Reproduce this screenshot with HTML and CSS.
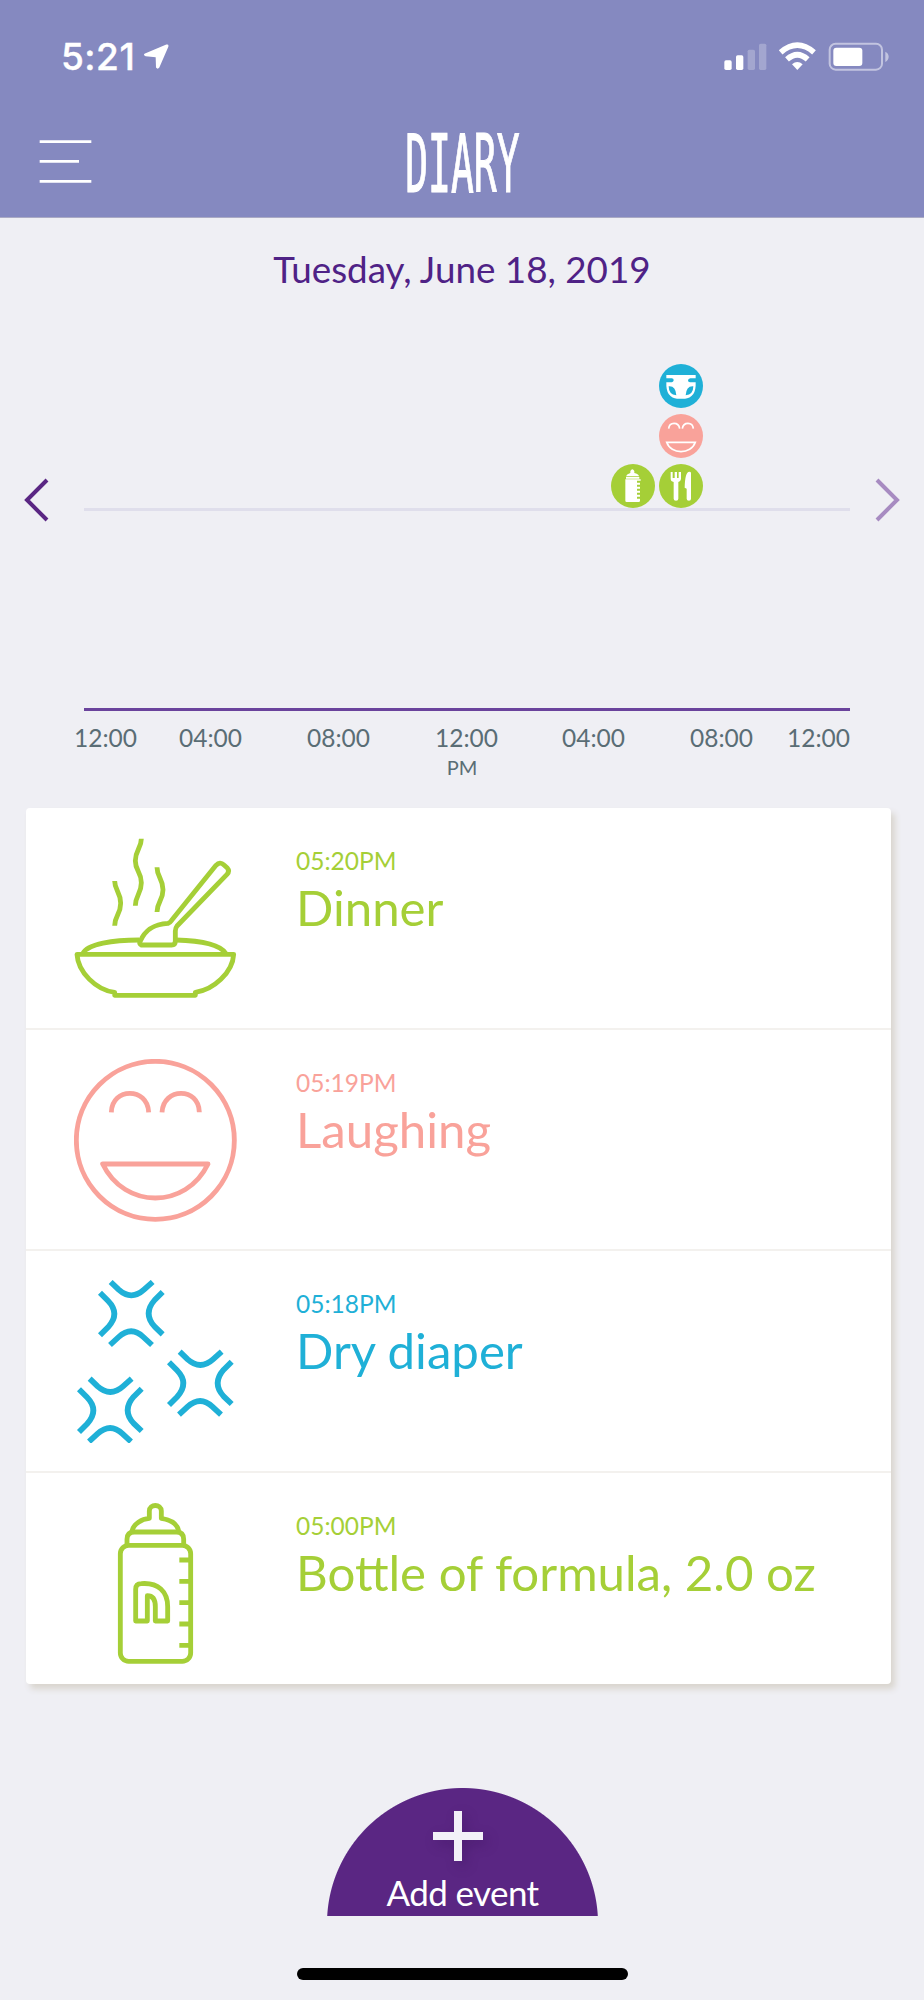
FILE: index.html
```html
<!DOCTYPE html>
<html lang="en">
<head>
    <meta charset="UTF-8">
    <meta name="viewport" content="width=device-width, initial-scale=1.0">
    <title>Diary</title>
    <link rel="stylesheet" href="styles.css">
</head>
<body>

    <header class="header">
        <div class="status-bar">
            <div class="clock">
                <span>5:21</span>
                <svg class="location" viewBox="430 130 78 80">
                    <path d="M436 161L500 134Q508 132 506 141L479 203Q474 210 469 203L468 172L438 169Q429 165 436 161Z"/>
                </svg>
            </div>
            <svg class="status-icons" viewBox="780 120 510 102">
                <rect x="787" y="181" width="22" height="29" rx="5"/>
                <rect x="822" y="166" width="22" height="44" rx="5"/>
                <g opacity="0.25">
                    <rect x="857" y="149" width="22" height="61" rx="5"/>
                    <rect x="891" y="131" width="22" height="79" rx="5"/>
                </g>
                <path d="M990 193Q1006 179 1022 193L1006 210Z"/>
                <path class="wifi" d="M956 157Q1006 114 1056 157M975 178Q1006 150 1037 178"/>
                <rect class="battery" x="1103" y="131" width="157" height="78" rx="18"/>
                <rect x="1114" y="143" width="87" height="55" rx="9"/>
                <path opacity="0.5" d="M1270 155Q1280 160 1280 170Q1280 180 1270 186Z"/>
            </svg>
        </div>
        <div class="title-bar">
            <svg class="menu" viewBox="117 414 159 138">
                <path d="M119 425H274M119 484H237M119 544H274"/>
            </svg>
            <h1><span>DIARY</span></h1>
        </div>
    </header>

    <h2 class="date">Tuesday, June 18, 2019</h2>

    <section class="chart">
        <svg class="arrow" viewBox="0 0 26 46">
            <path d="M23 3L3 23L23 43"/>
        </svg>
        <div class="plot">
            <div class="markers">
                <div class="stack">
                    <svg class="marker green" viewBox="62 340 132 132">
                        <circle cx="128" cy="406" r="66"/>
                        <path class="fill" d="M120 367V361Q126 351 132 361V367Q144 369 146 377H107Q110 369 120 367ZM107 379H147V384H107ZM105 386H151V390H140V396H149V402H140V408H149V414H140V420H149V426H140V432H149V438H140V444H149V450Q149 454 145 454H109Q105 454 105 450Z"/>
                    </svg>
                </div>
                <div class="stack">
                    <svg class="marker blue" viewBox="206 40 132 132">
                        <circle cx="272" cy="106" r="66"/>
                        <path class="fill" d="M228 73H316V83H228ZM228 95H240Q250 95 250 88Q250 84 244 83H300Q293 84 293 90Q294 95 304 95H316Q317 118 309 130Q298 144 284 144H260Q246 144 235 130Q227 118 228 95Z"/>
                        <path class="hole" d="M235 107Q256 105 258 134Q235 132 235 107ZM309 107Q288 105 286 134Q309 132 309 107Z"/>
                    </svg>
                    <svg class="marker pink" viewBox="206 190 132 132">
                        <circle cx="272" cy="256" r="66"/>
                        <path class="line" d="M235 234C237 213 265 213 268 234M276 234C279 213 307 213 309 234M229 275H315C302 312 242 312 229 275Z"/>
                    </svg>
                    <svg class="marker green" viewBox="206 340 132 132">
                        <circle cx="272" cy="406" r="66"/>
                        <path class="fill" d="M241 364H247V382H253V364H260V382H265V364H272V385Q271 392 264 394V444Q264 450 257 450Q250 450 250 444V394Q241 392 241 385ZM302 364V444Q302 450 296 450Q289 450 289 444V414L283 411Q284 363 297 363Q302 363 302 367Z"/>
                    </svg>
                </div>
            </div>
        </div>
        <svg class="arrow next" viewBox="0 0 26 46">
            <path d="M3 3L23 23L3 43"/>
        </svg>
    </section>

    <div class="hours">
        <span>12:00</span>
        <span>04:00</span>
        <span>08:00</span>
        <span>12:00</span>
        <span>04:00</span>
        <span>08:00</span>
        <span>12:00</span>
    </div>
    <div class="meridiem">PM</div>

    <main class="events">
        <article class="event green">
            <svg class="icon" viewBox="162 113 489 489">
                <path d="M364 118C364 147 346 152 346 184C346 216 364 216 364 250C364 284 346 288 346 319M284 245C284 274 302 278 302 312C302 346 284 348 284 379M411 204C411 234 429 238 429 271C429 304 411 308 411 338"/>
                <path d="M171 465H641C638 520 580 572 526 579V588H284V579C228 572 174 518 171 465ZM189 462C202 434 280 422 357 422M468 422C545 424 600 436 617 462"/>
                <path d="M364 437Q357 434 360 427C378 384 410 374 444 372Q450 370 455 363L588 198Q600 185 612 197L622 206Q630 215 621 225L471 380Q466 386 466 395V425Q466 437 455 437Z"/>
            </svg>
            <div class="info">
                <p class="time">05:20PM</p>
                <h3>Dinner</h3>
            </div>
        </article>
        <article class="event pink">
            <svg class="icon" viewBox="162 87 489 489">
                <circle cx="406" cy="331" r="237"/>
                <path d="M274 247C276 171 383 171 386 247M426 247C430 171 537 171 538 247"/>
                <path d="M248 402H564C498 538 314 538 248 402Z"/>
            </svg>
            <div class="info">
                <p class="time">05:19PM</p>
                <h3>Laughing</h3>
            </div>
        </article>
        <article class="event blue">
            <svg class="icon bursts" viewBox="162 91 489 489">
                <defs>
                    <g id="burst">
                        <path d="M-62 -95L-38 -72Q0 -38 38 -72L64 -95M-64 94L-38 70Q0 36 36 70L62 94M-94 -63L-70 -39Q-32 0 -70 41L-94 65M94 -65L70 -41Q34 0 70 39L94 62"/>
                    </g>
                </defs>
                <use href="#burst" x="334" y="192"/>
                <use href="#burst" x="541" y="401"/>
                <use href="#burst" x="271" y="482"/>
            </svg>
            <div class="info">
                <p class="time">05:18PM</p>
                <h3>Dry diaper</h3>
            </div>
        </article>
        <article class="event green">
            <svg class="icon" viewBox="162 96 489 489">
                <path d="M336 183C341 161 365 147 388 145V123C388 101 424 101 424 123V145C449 149 472 160 476 183"/>
                <path d="M321 225V208Q321 186 343 186H469Q491 186 491 208V225"/>
                <rect x="301" y="226" width="211" height="348" rx="25"/>
                <path d="M478 270H510M478 334H510M478 398H510M478 462H510M478 526H510"/>
                <path d="M347 453V358Q347 341 364 341C415 337 443 365 443 410V453H406V410Q406 377 382 377V453Z"/>
            </svg>
            <div class="info">
                <p class="time">05:00PM</p>
                <h3>Bottle of formula, 2.0 oz</h3>
            </div>
        </article>
    </main>

    <button class="add-event">
        <svg class="plus" viewBox="0 0 50 50">
            <path d="M25 0V50M0 25H50"/>
        </svg>
        <span>Add event</span>
    </button>

    <div class="home-indicator"></div>

</body>
</html>
```

FILE: styles.css
```css
:root {
    --header: #8589c0;
    --background: #efeff4;
    --surface: #ffffff;
    --purple: #4f2286;
    --button: #5a2683;
    --text: #5a6d75;
    --green: #a5cf37;
    --pink: #f9a29a;
    --blue: #1fb0d7;
}

* {
    box-sizing: border-box;
    margin: 0;
    padding: 0;
}

body {
    font-family: Lato, 'Open Sans', sans-serif;
    background-color: var(--background);
    height: 2000px;
    overflow: hidden;
}

svg {
    display: block;
    flex-shrink: 0;
}

.green { color: var(--green); }
.pink { color: var(--pink); }
.blue { color: var(--blue); }

/* Header */
.header {
    height: 218px;
    background: var(--header);
    border-bottom: 1px solid #aaaac4;
    color: white;
}

.status-bar {
    display: flex;
    justify-content: space-between;
    height: 113px;
    padding: 40px 32px 0 61px;
}

.clock {
    display: flex;
    height: 34px;
    font-family: Inter, sans-serif;
    font-size: 37px;
    font-weight: 500;
    line-height: 34px;
    -webkit-text-stroke: 0.4px white;
}

.clock span {
    width: 82px;
    letter-spacing: 0.5px;
}

.location {
    width: 26px;
    height: 27px;
    margin-top: 3px;
    fill: white;
}

.status-icons {
    width: 170px;
    height: 34px;
    fill: white;
}

.wifi {
    fill: none;
    stroke: white;
    stroke-width: 17;
}

.battery {
    fill: none;
    stroke: white;
    stroke-width: 6;
    opacity: 0.5;
}

.title-bar {
    display: grid;
    grid-template-columns: 53px 1fr 53px;
    padding: 0 39px;
    height: 96px;
    align-items: center;
}

.menu {
    width: 53px;
    height: 46px;
    stroke: white;
    stroke-width: 8;
}

h1 {
    display: flex;
    justify-content: center;
    padding-top: 8px;
    font-family: 'DejaVu Sans Mono', monospace;
    font-size: 80px;
    font-weight: normal;
    line-height: 88px;
}

h1 span {
    transform: scaleX(0.475);
    -webkit-text-stroke: 1.2px white;
}

/* Timeline */
.date {
    height: 102px;
    padding-top: 28px;
    text-align: center;
    font-size: 36.8px;
    font-weight: 400;
    line-height: 46px;
    color: var(--purple);
}

.chart {
    display: flex;
    align-items: center;
    justify-content: space-between;
    height: 391px;
    padding: 0 24px;
}

.arrow {
    width: 26px;
    height: 46px;
    margin-bottom: 31px;
    fill: none;
    stroke: var(--button);
    stroke-width: 4;
}

.next {
    stroke: #a78bc1;
}

.plot {
    align-self: flex-end;
    width: 766px;
    height: 350px;
    margin-left: 9px;
    border-bottom: 3px solid #6a439c;
}

.markers {
    display: flex;
    align-items: flex-end;
    gap: 4px;
    height: 150px;
    padding-left: 527px;
    border-bottom: 3px solid #dfdeeb;
}

.stack {
    display: flex;
    flex-direction: column;
    gap: 6px;
}

.marker {
    width: 44px;
    height: 44px;
    fill: currentColor;
}

.marker .fill {
    fill: white;
}

.marker .hole {
    fill: currentColor;
}

.marker .line {
    fill: none;
    stroke: white;
    stroke-width: 5;
}

.hours {
    display: grid;
    grid-template-columns: 105px 128px 128px 127px 128px 97px 66px;
    margin: 11px 0 0 74px;
    font-size: 24.5px;
    line-height: 32px;
    color: var(--text);
}

.meridiem {
    height: 54px;
    text-align: center;
    font-size: 20px;
    line-height: 26px;
    color: var(--text);
}

/* Event list */
.events {
    width: 865px;
    height: 876px;
    margin-left: 26px;
    background: var(--surface);
    border-radius: 4px;
    box-shadow: 4px 5px 6px #d9d5ce;
}

.event {
    display: flex;
    height: 221.5px;
    padding: 29px 0 0 48px;
    border-bottom: 2px solid #f3f1ee;
}

.event:last-child {
    height: 211px;
    border-bottom: none;
}

.icon {
    width: 163px;
    height: 163px;
    fill: none;
    stroke: currentColor;
    stroke-width: 14.5;
    stroke-linejoin: round;
}

.bursts {
    stroke-width: 17;
}

.info {
    padding: 8px 0 0 59px;
}

.time {
    font-size: 24.5px;
    font-weight: 400;
    line-height: 32px;
}

h3 {
    font-size: 49.2px;
    font-weight: 400;
    line-height: 60px;
}

/* Footer */
.add-event {
    display: flex;
    flex-direction: column;
    align-items: center;
    width: 271px;
    height: 128px;
    margin: 104px 0 0 327px;
    padding-top: 23px;
    border: none;
    background: radial-gradient(circle at 50% 135.5px, var(--button) 135px, transparent 136px);
    color: white;
    font-family: inherit;
    font-size: 35px;
    letter-spacing: -0.6px;
    line-height: 42px;
}

.plus {
    width: 50px;
    height: 50px;
    margin: 0 9px 10px 0;
    stroke: #f3f1f8;
    stroke-width: 8;
    filter: drop-shadow(4px 5px 6px rgba(50, 10, 80, 0.3));
}

.home-indicator {
    width: 331px;
    height: 12px;
    margin: 52px 0 0 297px;
    border-radius: 6px;
    background: black;
}
```
